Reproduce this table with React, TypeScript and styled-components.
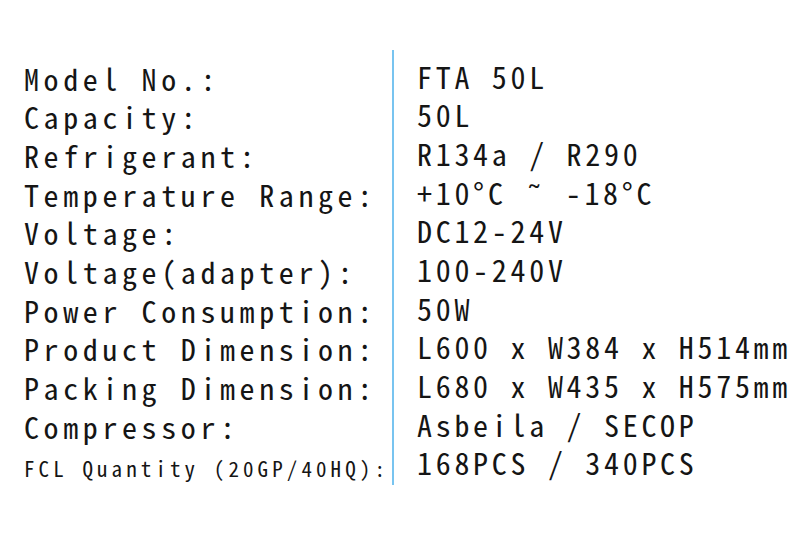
import React from "react";
import styled, { createGlobalStyle } from "styled-components";

const FONT = `"Noto Sans Mono CJK SC", "Liberation Mono", monospace`;

const GlobalStyle = createGlobalStyle`
  html, body {
    margin: 0;
    padding: 0;
    background: #ffffff;
  }
  body {
    font-family: ${FONT};
    color: #111111;
  }
`;

const Sheet = styled.main`
  width: 800px;
  height: 533px;
  box-sizing: border-box;
  padding-left: 24px;
  display: flex;
  align-items: flex-start;
  background: #ffffff;
  overflow: hidden;
`;

const LabelColumn = styled.div`
  width: 368px;
  padding-top: 58.5px;
  display: flex;
  flex-direction: column;
`;

const ValueColumn = styled.div`
  margin-top: 50px;
  padding: 6.6px 0 0 23px;
  border-left: 2px solid #78c4f0;
  display: flex;
  flex-direction: column;
  height: 428.4px;
`;

const Label = styled.div<{ $small?: boolean }>`
  height: 38.7px;
  font-family: ${FONT};
  font-size: ${(p) => (p.$small ? "21px" : "30px")};
  line-height: ${(p) => (p.$small ? "46.5px" : "38.7px")};
  letter-spacing: ${(p) => (p.$small ? "4.1px" : "4.6px")};
  white-space: pre;
  color: #151515;
`;

const Value = styled.div`
  height: 38.7px;
  font-family: ${FONT};
  font-size: 30px;
  line-height: 38.7px;
  letter-spacing: 3.7px;
  white-space: pre;
  color: #151515;
`;

const rows: { label: string; value: string; small?: boolean }[] = [
  { label: "Model No.:", value: "FTA 50L" },
  { label: "Capacity:", value: "50L" },
  { label: "Refrigerant:", value: "R134a / R290" },
  { label: "Temperature Range:", value: "+10°C ˜ -18°C" },
  { label: "Voltage:", value: "DC12-24V" },
  { label: "Voltage(adapter):", value: "100-240V" },
  { label: "Power Consumption:", value: "50W" },
  { label: "Product Dimension:", value: "L600 x W384 x H514mm" },
  { label: "Packing Dimension:", value: "L680 x W435 x H575mm" },
  { label: "Compressor:", value: "Asbeila / SECOP" },
  { label: "FCL Quantity (20GP/40HQ):", value: "168PCS / 340PCS", small: true },
];

export default function App() {
  return (
    <>
      <GlobalStyle />
      <Sheet>
        <LabelColumn>
          {rows.map((r) => (
            <Label key={r.label} $small={r.small}>
              {r.label}
            </Label>
          ))}
        </LabelColumn>
        <ValueColumn>
          {rows.map((r) => (
            <Value key={r.label}>{r.value}</Value>
          ))}
        </ValueColumn>
      </Sheet>
    </>
  );
}
